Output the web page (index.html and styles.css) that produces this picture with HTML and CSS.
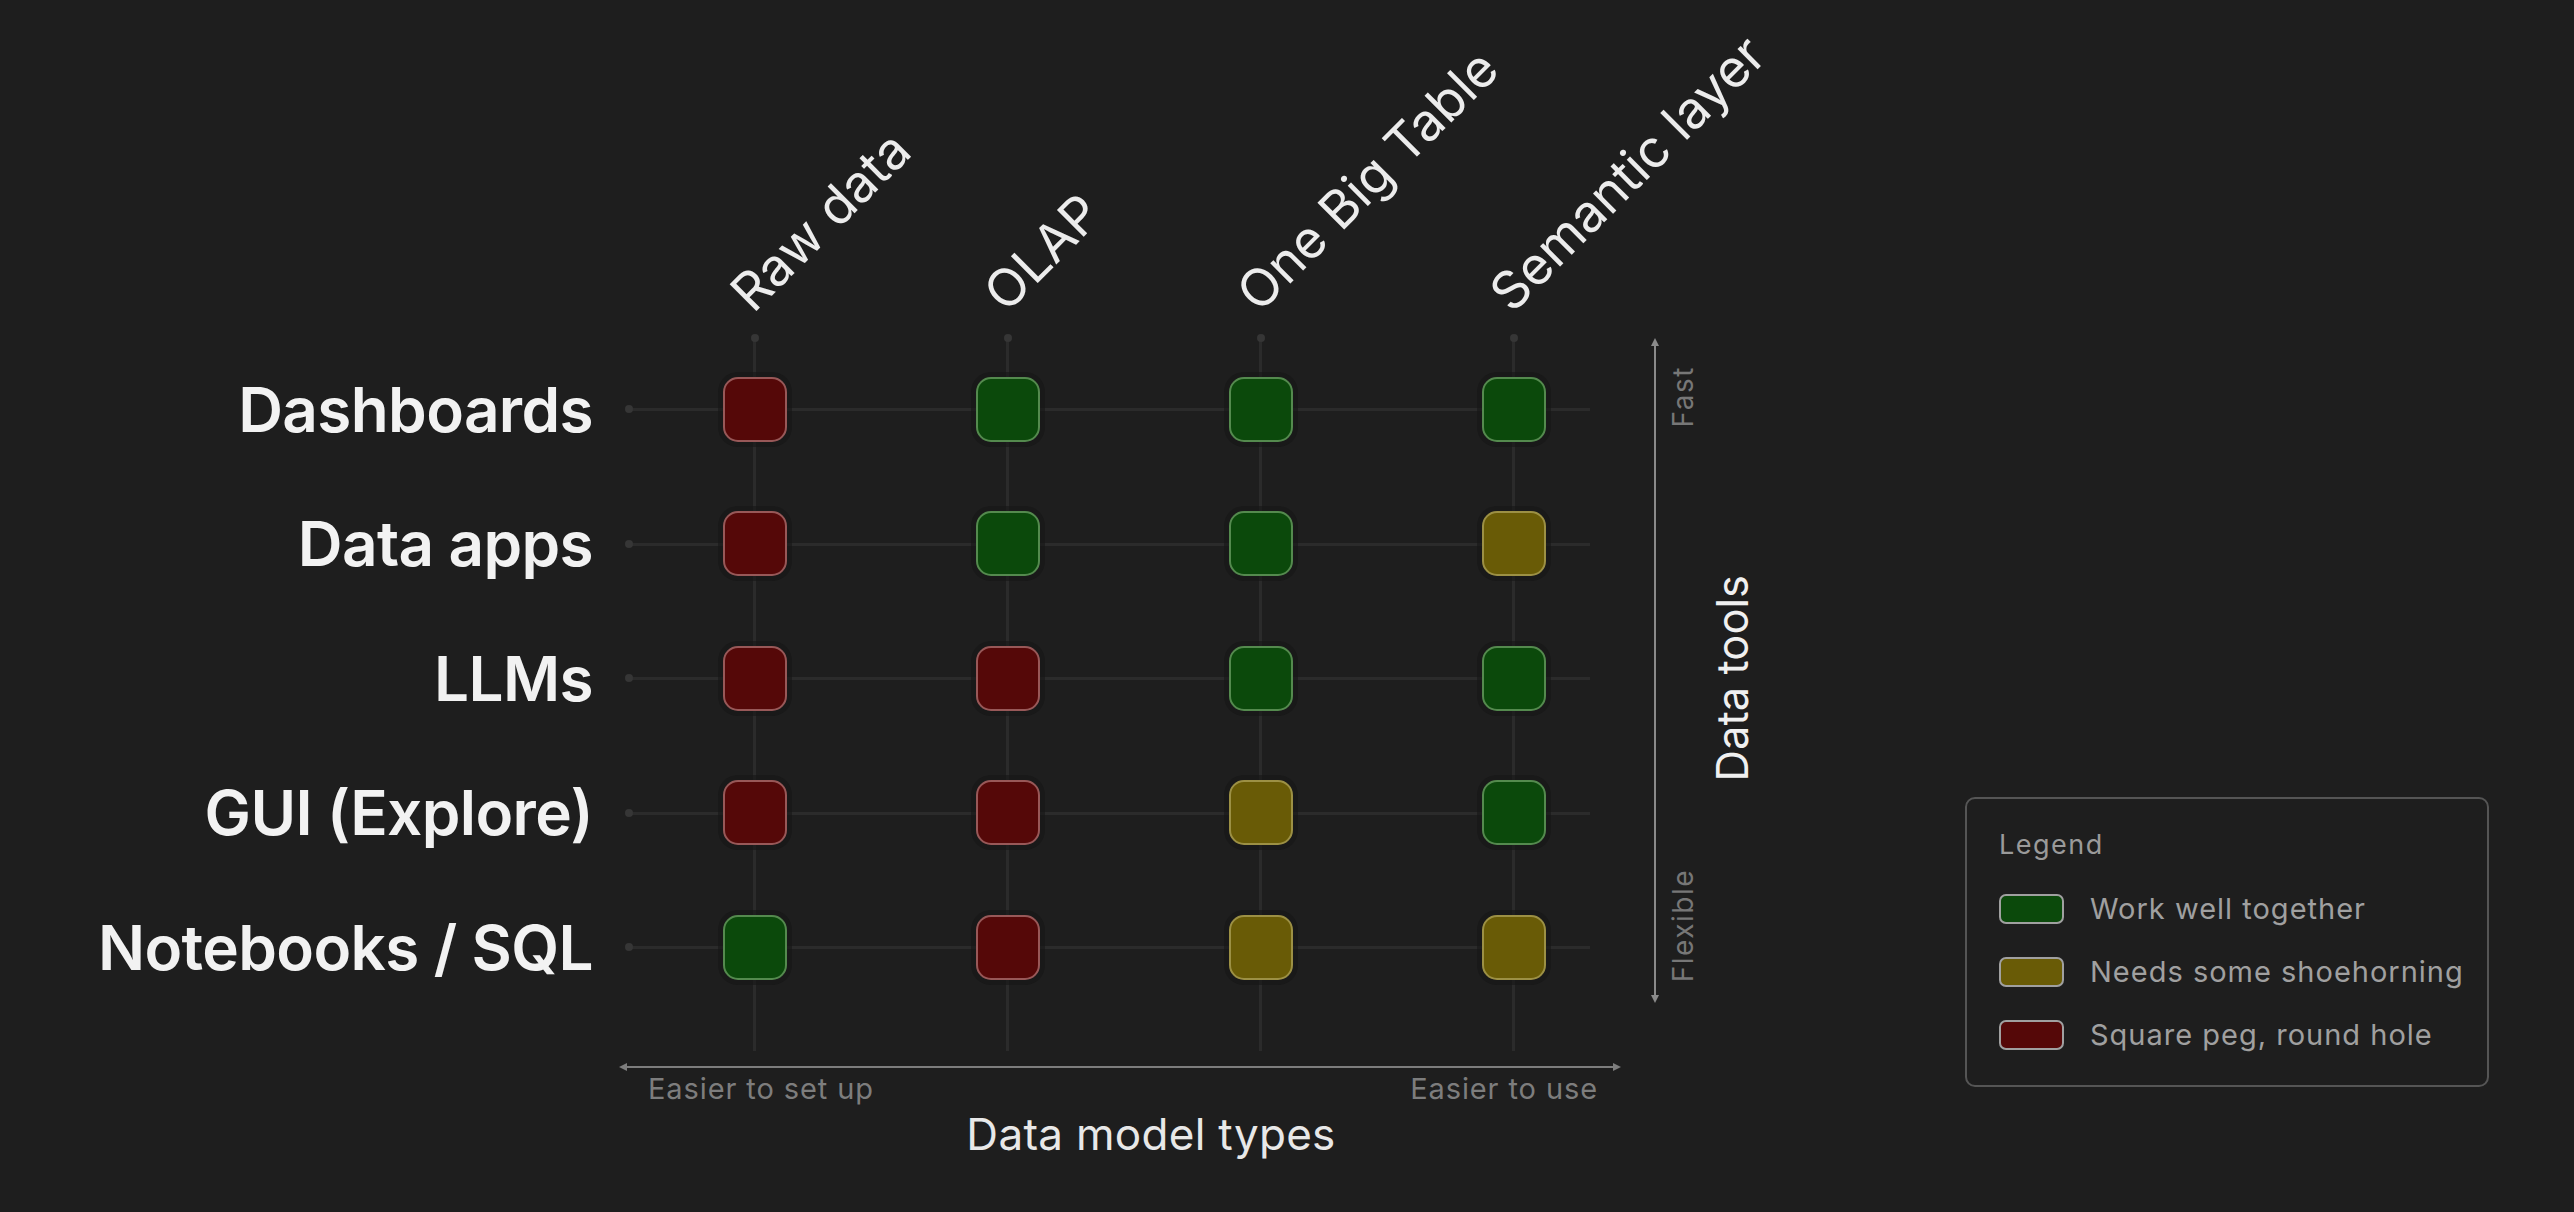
FILE: index.html
```html
<!DOCTYPE html>
<html lang="en">
<head>
<meta charset="utf-8">
<title>Data tools vs data model types</title>
<link rel="stylesheet" href="styles.css">
</head>
<body>
<main class="slide">
  <section class="chart">
    <div class="head c1"><span>Raw data</span></div>
    <div class="head c2"><span>OLAP</span></div>
    <div class="head c3"><span>One Big Table</span></div>
    <div class="head c4"><span>Semantic layer</span></div>

    <div class="label r1">Dashboards</div>
    <div class="label r2">Data apps</div>
    <div class="label r3">LLMs</div>
    <div class="label r4">GUI (Explore)</div>
    <div class="label r5">Notebooks / SQL</div>

    <div class="hline r1"></div>
    <div class="hline r2"></div>
    <div class="hline r3"></div>
    <div class="hline r4"></div>
    <div class="hline r5"></div>

    <div class="vline c1"></div>
    <div class="vline c2"></div>
    <div class="vline c3"></div>
    <div class="vline c4"></div>

    <div class="cell r1 c1"><span class="box bad"></span></div>
    <div class="cell r1 c2"><span class="box good"></span></div>
    <div class="cell r1 c3"><span class="box good"></span></div>
    <div class="cell r1 c4"><span class="box good"></span></div>

    <div class="cell r2 c1"><span class="box bad"></span></div>
    <div class="cell r2 c2"><span class="box good"></span></div>
    <div class="cell r2 c3"><span class="box good"></span></div>
    <div class="cell r2 c4"><span class="box meh"></span></div>

    <div class="cell r3 c1"><span class="box bad"></span></div>
    <div class="cell r3 c2"><span class="box bad"></span></div>
    <div class="cell r3 c3"><span class="box good"></span></div>
    <div class="cell r3 c4"><span class="box good"></span></div>

    <div class="cell r4 c1"><span class="box bad"></span></div>
    <div class="cell r4 c2"><span class="box bad"></span></div>
    <div class="cell r4 c3"><span class="box meh"></span></div>
    <div class="cell r4 c4"><span class="box good"></span></div>

    <div class="cell r5 c1"><span class="box good"></span></div>
    <div class="cell r5 c2"><span class="box bad"></span></div>
    <div class="cell r5 c3"><span class="box meh"></span></div>
    <div class="cell r5 c4"><span class="box meh"></span></div>

    <div class="yaxis">
      <div class="yline"></div>
      <div class="yends">
        <span>Fast</span>
        <span>Flexible</span>
      </div>
      <div class="ytitle">Data tools</div>
    </div>

    <div class="xaxis">
      <div class="xline"></div>
      <div class="xends">
        <span>Easier to set up</span>
        <span>Easier to use</span>
      </div>
      <div class="xtitle">Data model types</div>
    </div>
  </section>

  <aside class="legend">
    <div class="legend-title">Legend</div>
    <div class="legend-item"><span class="swatch good"></span><span>Work well together</span></div>
    <div class="legend-item"><span class="swatch meh"></span><span>Needs some shoehorning</span></div>
    <div class="legend-item"><span class="swatch bad"></span><span>Square peg, round hole</span></div>
  </aside>
</main>
</body>
</html>
```

FILE: styles.css
```css
* { box-sizing: border-box; }

html, body {
  margin: 0;
  padding: 0;
}

body {
  width: 2574px;
  height: 1212px;
  overflow: hidden;
  background: #1e1e1e;
  color: #f0f0f0;
  font-family: Inter, "Liberation Sans", "DejaVu Sans", sans-serif;
}

.slide {
  display: flex;
  align-items: flex-start;
  padding-left: 70px;
}

.chart {
  display: grid;
  grid-template-columns: 523px 35px repeat(4, 253px) 130px;
  grid-template-rows: 342px repeat(5, 134.5px) auto;
}

/* grid placement */
.r1 { grid-row: 2; }
.r2 { grid-row: 3; }
.r3 { grid-row: 4; }
.r4 { grid-row: 5; }
.r5 { grid-row: 6; }
.c1 { grid-column: 3; }
.c2 { grid-column: 4; }
.c3 { grid-column: 5; }
.c4 { grid-column: 6; }

/* column headers */
.head {
  grid-row: 1;
  display: flex;
  align-items: flex-end;
  padding-bottom: 22px;
}

.head span {
  margin-left: 131px;
  font-size: 52px;
  line-height: 1;
  white-space: nowrap;
  color: #ececec;
  transform-origin: 0 100%;
  transform: rotate(-45deg);
}

/* row labels */
.label {
  grid-column: 1;
  display: flex;
  align-items: center;
  justify-content: flex-end;
  font-size: 62px;
  font-weight: 600;
  letter-spacing: -0.01em;
  color: #f2f2f2;
  white-space: nowrap;
}

/* grid lines */
.hline {
  grid-column: 3 / 7;
  position: relative;
}

.hline::before {
  content: "";
  position: absolute;
  left: 0;
  top: 50%;
  width: 962px;
  height: 3px;
  margin-top: -1px;
  background: #2b2b2b;
}

.hline::after {
  content: "";
  position: absolute;
  left: -3px;
  top: 50%;
  width: 8px;
  height: 8px;
  margin-top: -4px;
  border-radius: 50%;
  background: #363636;
}

.vline {
  grid-row: 2 / 7;
  position: relative;
}

.vline::before {
  content: "";
  position: absolute;
  left: 50%;
  top: -4px;
  bottom: -36px;
  width: 3px;
  margin-left: -1.5px;
  background: #2b2b2b;
}

.vline::after {
  content: "";
  position: absolute;
  left: 50%;
  top: -8px;
  width: 8px;
  height: 8px;
  margin-left: -4px;
  border-radius: 50%;
  background: #363636;
}

/* cells */
.cell {
  position: relative;
  display: flex;
  align-items: center;
  justify-content: center;
}

.box {
  width: 64px;
  height: 65px;
  border-radius: 15px;
  border: 2.5px solid;
  box-shadow: 0 0 0 5px rgba(22, 22, 22, 0.6);
}

.bad  { background: #550808; border-color: #985858; }
.good { background: #0b490b; border-color: #548a4e; }
.meh  { background: #695b06; border-color: #9c9044; }

/* y axis */
.yaxis {
  grid-column: 7;
  grid-row: 2 / 7;
  display: flex;
  padding-left: 14px;
}

.yline {
  position: relative;
  width: 2px;
  margin-bottom: 16px;
  background: #8a8a8a;
}

.yline::before,
.yline::after {
  content: "";
  position: absolute;
  left: -3px;
  border-left: 4px solid transparent;
  border-right: 4px solid transparent;
}

.yline::before {
  top: -4px;
  border-bottom: 8px solid #8a8a8a;
}

.yline::after {
  bottom: -4px;
  border-top: 8px solid #8a8a8a;
}

.yends {
  display: flex;
  flex-direction: column;
  justify-content: space-between;
  margin-left: 12px;
  padding: 24px 0 32px;
}

.yends span,
.ytitle {
  writing-mode: vertical-rl;
  transform: rotate(180deg);
  white-space: nowrap;
}

.yends span {
  font-size: 28px;
  line-height: 30px;
  letter-spacing: 1.5px;
  color: #777777;
}

.ytitle {
  align-self: center;
  margin-left: 12px;
  font-size: 43.5px;
  line-height: 44px;
  color: #f0f0f0;
}

/* x axis */
.xaxis {
  grid-row: 7;
  grid-column: 3 / 7;
  margin-left: -5px;
  margin-right: 23px;
  padding-top: 51px;
}

.xline {
  position: relative;
  height: 2px;
  background: #7d7d7d;
}

.xline::before,
.xline::after {
  content: "";
  position: absolute;
  top: -3px;
  border-top: 4px solid transparent;
  border-bottom: 4px solid transparent;
}

.xline::before {
  left: -4px;
  border-right: 8px solid #7d7d7d;
}

.xline::after {
  right: -4px;
  border-left: 8px solid #7d7d7d;
}

.xends {
  display: flex;
  justify-content: space-between;
  padding: 0 19px 0 25px;
  margin-top: 4px;
  font-size: 29px;
  line-height: 34px;
  letter-spacing: 0.9px;
  color: #7d7d7d;
}

.xtitle {
  margin-top: 2px;
  padding-left: 62px;
  text-align: center;
  font-size: 44px;
  line-height: 52px;
  letter-spacing: 0.3px;
  color: #e8e8e8;
}

/* legend */
.legend {
  margin-left: 195px;
  margin-top: 797px;
  width: 524px;
  height: 290px;
  padding: 30px 0 0 32px;
  border: 2px solid #555555;
  border-radius: 10px;
}

.legend-title {
  font-size: 27px;
  line-height: 32px;
  letter-spacing: 1.5px;
  color: #9a9a9a;
  margin-bottom: 16px;
}

.legend-item {
  display: flex;
  align-items: center;
  gap: 26px;
  height: 63px;
  font-size: 29px;
  letter-spacing: 1px;
  color: #a0a0a0;
}

.swatch {
  width: 65px;
  height: 30px;
  border-radius: 7px;
  border: 2px solid;
}
```
